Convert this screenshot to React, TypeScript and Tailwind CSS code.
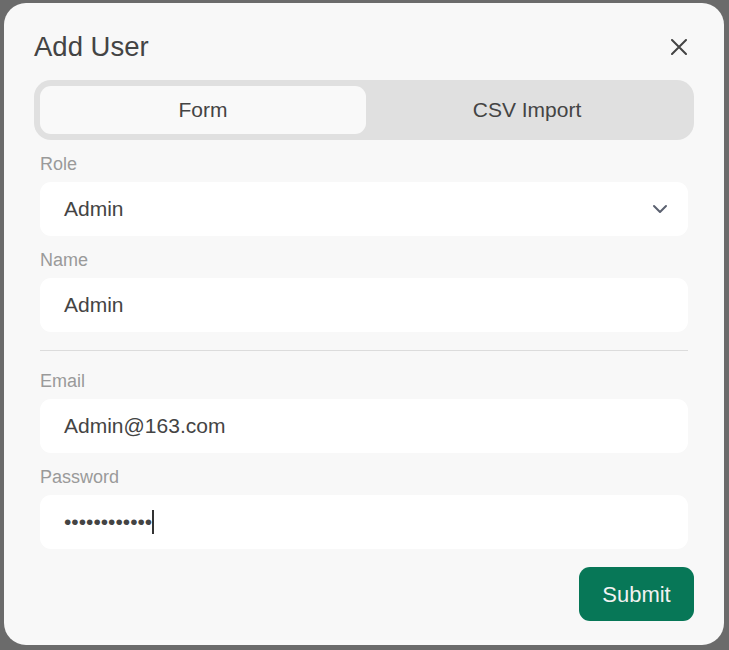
import React from "react";

const font = { fontFamily: '"Liberation Sans", Arial, sans-serif' };

function Field({ label, children, className = "" }: { label: string; children: React.ReactNode; className?: string }) {
  return (
    <div className={"flex flex-col " + className}>
      <div className="pt-[1px] text-[18px] leading-[25px] text-[#9a9a9a]">{label}</div>
      <div className="mt-[5px] h-[54px] bg-white rounded-[11px] flex items-center px-[24px] text-[21px] text-[#444]">
        {children}
      </div>
    </div>
  );
}

export default function App() {
  return (
    <div style={font} className="w-[729px] h-[650px] bg-[#6b6b6b] pt-[3px] pl-[4px]">
      <div className="w-[720px] h-[642px] rounded-[22px] bg-[#f8f8f8] px-[30px] pt-[22px] flex flex-col">
        <div className="h-[44px] flex items-center justify-between">
          <div className="text-[27.5px] text-[#444] leading-none">Add User</div>
          <svg width="16" height="16" viewBox="0 0 16 16" className="mr-[7px]">
            <path d="M1 1 L15 15 M15 1 L1 15" stroke="#444" strokeWidth="2" strokeLinecap="round" />
          </svg>
        </div>
        <div className="mt-[11px] h-[60px] rounded-[17px] bg-[#e0e0e0] p-[6px] flex">
          <div className="w-[326px] rounded-[11px] bg-[#f9f9f9] flex items-center justify-center text-[21px] text-[#444]">
            Form
          </div>
          <div className="flex-1 flex items-center justify-center text-[21px] text-[#444]">CSV Import</div>
        </div>
        <div className="px-[6px] flex flex-col">
          <Field label="Role" className="mt-[11px]">
            <span className="flex-1">Admin</span>
            <svg width="16" height="10" viewBox="0 0 16 10" className="mr-[-4px]">
              <path d="M2 2 L8 8 L14 2" stroke="#5b6170" strokeWidth="2" fill="none" strokeLinecap="round" strokeLinejoin="round" />
            </svg>
          </Field>
          <Field label="Name" className="mt-[11px]">
            <span>Admin</span>
          </Field>
          <div className="mt-[18px] h-px bg-[#dcdcdc]" />
          <Field label="Email" className="mt-[17px]">
            <span>Admin@163.com</span>
          </Field>
          <Field label="Password" className="mt-[11px]">
            <span className="text-[21px]">••••••••••••</span>
            <span className="w-[2px] h-[24px] bg-[#333]" />
          </Field>
        </div>
        <div className="mt-[18px] flex justify-end">
          <button className="w-[115px] h-[54px] rounded-[11px] bg-[#077757] text-[#f2f2f2] text-[22px] font-normal">
            Submit
          </button>
        </div>
      </div>
    </div>
  );
}
